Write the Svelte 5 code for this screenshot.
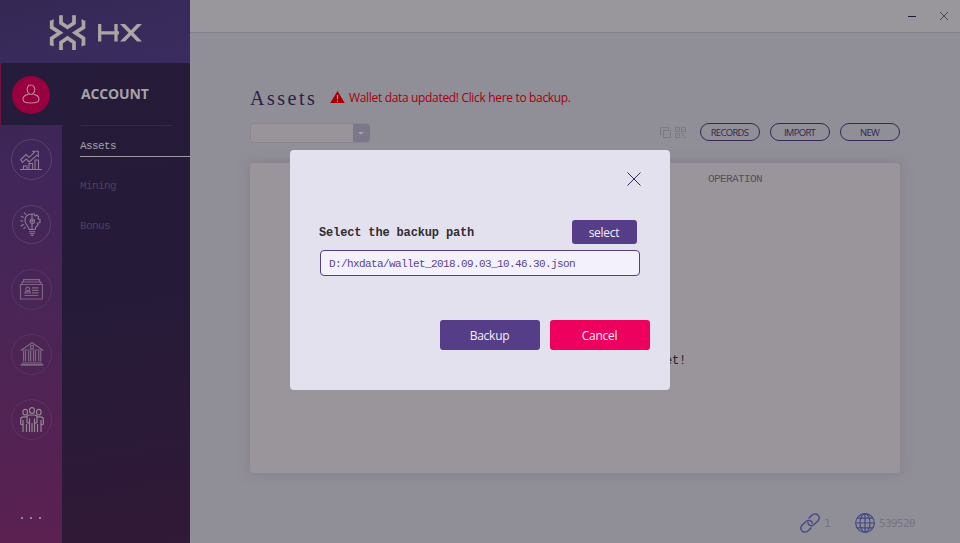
<script>
  const menu = ['Assets', 'Mining', 'Bonus'];
  const actions = ['RECORDS', 'IMPORT', 'NEW'];
  let path = $state('D:/hxdata/wallet_2018.09.03_10.46.30.json');
</script>

<div class="app">
  <aside class="side">
    <header class="brand">
      <svg class="mark" width="37" height="36" viewBox="0 0 37 36" fill="none" stroke="#a9a6a3" stroke-width="3.7">
        <path d="M12 .3V8L18.500 12.200 25 8V.3" />
        <path d="M12 35V27.400L18.500 23 25 27.400V35" />
        <path d="M2.700 5.500V12.400L11 17.800 2.700 23.200V30.500" />
        <path d="M34.500 5.500V12.400L26.200 17.800 34.500 23.200V30.500" />
        <path d="M.9 7L4.500 3.700V7ZM36.300 7L32.700 3.700V7ZM.9 29L4.500 31.700V28ZM36.300 29L32.700 31.700V28Z" fill="#a9a6a3" stroke="none" />
      </svg>
      <svg class="mark-name" width="44" height="18" viewBox="0 0 44 18" fill="none" stroke="#a9a6a3" stroke-width="3.300">
        <path d="M1.700 0V17.500M18 0V17.500M2 8.800H21" />
        <path d="M22 0H27L33 6.200 39 0H44L35.500 8.700 44 17.500H39L33 11.200 27 17.500H22L30.500 8.700Z" fill="#a9a6a3" stroke="none" />
      </svg>
    </header>
    <div class="columns">
      <nav class="rail">
        <div class="tile active">
          <span class="disc red">
            <svg width="18" height="21" viewBox="0 0 18 21" fill="none" stroke="#c0859a" stroke-width="1.1">
              <path d="M9 1C6.500 1 5.200 3 5.200 5.500S6.900 10.500 9 10.500 12.800 8 12.800 5.500 11.500 1 9 1ZM6.500 10.400C3 11 1 12.400 1 15.200 1 18 4 19 9 19S17 18 17 15.200C17 12.400 15 11 11.500 10.400" />
            </svg>
          </span>
        </div>
        <div class="tile">
          <span class="disc">
            <svg width="22" height="22" viewBox="0 0 22 22" fill="none" stroke="#8c7c94" stroke-width="1.1">
              <path d="M0 20.500H22M3.500 20V17H7V20M9 20V14.500H12.500V20M15 20V11H18.500V20M.7 10.500L6 5.500 9 8.300 14.300 3.500 13 2.200H18.300V7.500L17 6.200 9.200 13 6.200 10 2.300 13.300Z" />
            </svg>
          </span>
        </div>
        <div class="tile">
          <span class="disc small">
            <svg width="22" height="25" viewBox="0 0 22 25" fill="none" stroke="#8c7c94" stroke-width="1.100">
              <path d="M12 2C7.300 2 5 5 5 8.700 5 12.500 8.700 14 9.200 17.500H15.200C15.200 15 16.500 14 18 13L17.300 11.300 20 10.500V7.500L17.900 6.700 18.600 4.800 16.700 3 15 4 14.300 2ZM12 2V7M12 11.500V17.500M9.200 19.700H15.200M9.500 21.800H14.900M11 23.500H13.400M.2 9H3.200M.8 4L3.700 5.500M4 .5L6 2.700M.8 14.200L3.700 12.200M3.500 17L5.500 14.800" />
              <circle cx="12.300" cy="9.200" r="2.200" /><circle cx="12.300" cy="9.200" r=".6" />
            </svg>
          </span>
        </div>
        <div class="tile">
          <span class="disc faint">
            <svg width="24" height="22" viewBox="0 0 24 22" fill="none" stroke="#7d6683" stroke-width="1.200">
              <path d="M1.500 5.500H23.500V20H1.500ZM3 5V3H22V5M4.500 2.500V.7H20.500V2.500M13 8.800H19.500M13 11.300H19.500M13 13.800H19.500M5.500 16.500H19.500M6 14Q6 12.200 8.700 12.200T11.500 14Z" />
              <circle cx="8.700" cy="10" r="1.900" />
            </svg>
          </span>
        </div>
        <div class="tile">
          <span class="disc faint">
            <svg class="nudge" width="24" height="25" viewBox="0 0 24 25" fill="none" stroke="#7d6683" stroke-width="1.200">
              <path d="M1.500 8L12 .7 22.500 8ZM3.500 9V19.500M5.500 9V19.500M8.700 9V19.500M10.700 9V19.500M13.500 9V19.500M15.500 9V19.500M18.700 9V19.500M20.700 9V19.500M2 21H22" />
              <path d="M.7 22.800H23.300" stroke-width="1.800" /><circle cx="12" cy="5" r="1.700" />
            </svg>
          </span>
        </div>
        <div class="tile">
          <span class="disc faint">
            <svg class="nudge" width="24" height="26" viewBox="0 0 24 26" fill="none" stroke="#918791" stroke-width="1.200">
              <ellipse cx="12" cy="3.500" rx="2.500" ry="2.900" /><ellipse cx="5.200" cy="5.200" rx="2.300" ry="2.800" /><ellipse cx="18.800" cy="5.200" rx="2.300" ry="2.800" />
              <path d="M9.500 25V16.500L7 15.500V10.500Q7 8 9.500 8H14.500Q17 8 17 10.500V15.500L14.500 16.500V25M12 16V25M6.500 9.800H3.500Q.7 9.800 .7 12.500V17L3 18V25M3 13V18M6.500 17V25M17.500 9.800H20.500Q23.300 9.800 23.300 12.500V17L21 18V25M21 13V18M17.500 17V25M9.500 11.500V16.500M14.500 11.500V16.500" />
            </svg>
          </span>
        </div>
        <div class="more"><i></i><i></i><i></i></div>
      </nav>
      <section class="submenu">
        <h2>ACCOUNT</h2>
        <ul>
          {#each menu as item, i}
            <li class:current={i === 0}>{item}</li>
          {/each}
        </ul>
      </section>
    </div>
  </aside>

  <main>
    <div class="titlebar">
      <svg width="8" height="10" viewBox="0 0 8 10"><path d="M0 5.500H8" stroke="#211739" /></svg>
      <svg width="8" height="10" viewBox="0 0 8 10"><path d="M0 1L8 9M8 1L0 9" stroke="#4d4855" /></svg>
    </div>
    <div class="heading">
      <h1>Assets</h1>
      <svg width="15" height="13" viewBox="0 0 15 13"><path d="M7.500 0L14.700 12H.3Z" fill="#a70000" /><path d="M7.500 4V8.300M7.500 9.500V10.800" stroke="#aaa0a6" stroke-width="1.200" /></svg>
      <span>Wallet data updated! Click here to backup.</span>
    </div>
    <div class="tools">
      <div class="combo"><b><svg width="6" height="3" viewBox="0 0 6 3"><path d="M0 0H6L3 2.500Z" fill="#a8a5b0" /></svg></b></div>
      <svg class="copy" width="26" height="12" viewBox="0 0 26 12" fill="none" stroke="#7b7984">
        <path d="M3.500 3.500H10.500V10.500H3.500ZM2.500 7.500H.5V.5H8.500V2.500M15.500 .5H19.500V4.500H15.500ZM21.500 .5H25.500V4.500H21.500ZM15.500 6.500H19.500V10.500H15.500ZM21 6.500H23M25 6.500H26M22 8.500H24M21 10.500H22M24 10.500H26M17 2.500H18M23 2.500H24M17 8.500H18" />
      </svg>
      <div class="pills">
        {#each actions as action}<button>{action}</button>{/each}
      </div>
    </div>
    <div class="card">
      <div class="th">OPERATION</div>
      <div class="empty">You have no account in the wallet!</div>
    </div>
    <footer>
      <svg width="20" height="20" viewBox="0 0 20 20" fill="none" stroke="#434787" stroke-width="1.400">
        <path d="M9.500 12.200Q11.500 13.400 13.500 12L18.300 7.500Q20.500 4 17.300 1.500 14.500 .1 12.400 1.700L8.600 5.500M9.500 12.200Q7.300 11 8.200 8.800M10.700 7.800Q8.700 6.800 6.500 8L1.700 12.500Q-.5 16 2.700 18.500 5.500 19.900 7.600 18.300L11.400 14.500M10.700 7.800Q12.700 9 12 11" />
      </svg>
      <span class="peers">1</span>
      <svg width="20" height="20" viewBox="0 0 20 20" fill="none" stroke="#434787" stroke-width="1.200">
        <circle cx="10" cy="10" r="9.300" /><ellipse cx="10" cy="10" rx="5" ry="9.300" /><path d="M10 .7V19.300M.7 10H19.300M2.200 5.200H17.800M2.200 14.800H17.800" />
      </svg>
      <span>539520</span>
    </footer>
  </main>

  <div class="dialog">
    <div class="close">
      <svg width="14" height="14" viewBox="0 0 14 14"><path d="M.5 .5L13.500 13.500M13.500 .5L.5 13.500" stroke="#34265a" stroke-width="1" /></svg>
    </div>
    <div class="pick">
      <strong>Select the backup path</strong>
      <button>select</button>
    </div>
    <input bind:value={path} spellcheck="false" />
    <div class="buttons">
      <button>Backup</button>
      <button class="cancel">Cancel</button>
    </div>
  </div>
</div>

<style>
  * { box-sizing: border-box; }
  .app { position: relative; display: flex; width: 960px; height: 543px; overflow: hidden; background: #908e97; font-family: "Open Sans", "Noto Sans", sans-serif; }
  button { border: 0; padding: 0; font-family: inherit; }
  svg { display: block; flex: none; }
  .side { width: 190px; display: flex; flex-direction: column; }
  .brand { height: 63px; background: linear-gradient(165deg, #352854, #3b2c60); display: flex; padding: 15px 0 0 49px; gap: 12px; }
  .mark-name { margin-top: 9px; }
  .columns { flex: 1; display: flex; }
  .rail { width: 62px; background: linear-gradient(175deg, #37264f 0, #40265a 20%, #4b2555 55%, #5b2151 100%); display: flex; flex-direction: column; }
  .tile { height: 65px; display: flex; justify-content: center; align-items: center; padding-top: 4px; }
  .tile.active { height: 62px; background: #251b3a; padding: 1px 1px 0 0; border-left: 1px solid #73123e; }
  .disc { width: 41px; height: 41px; border: 1px solid #5b426e; border-radius: 50%; display: flex; align-items: center; justify-content: center; }
  .disc.small { width: 39px; height: 39px; }
  .disc.faint { border-color: #53366a; }
  .disc.red { width: 38px; height: 38px; background: #98003f; border: 0; }
  .nudge { margin-left: 1px; }
  .more { display: flex; gap: 7px; margin: 67px 0 0 21px; }
  .more i { width: 2px; height: 2px; background: #8f8792; }
  .submenu { flex: 1; background: linear-gradient(170deg, #251b3a 0, #251b38 50%, #311937 100%); }
  h2 { margin: 0 17px 0 19px; height: 63px; border-bottom: 1px solid #33265c; font: 700 14px/62px "Open Sans", sans-serif; color: #a6a3a5; letter-spacing: -.15px; }
  ul { margin: 0; padding: 12px 0 0 18px; list-style: none; }
  li { height: 40px; font: 11px/17px "Liberation Mono", monospace; letter-spacing: -.6px; color: #4b405e; }
  li.current { height: 19px; margin-bottom: 21px; border-bottom: 1px solid #a09ca4; color: #a5a1a6; }
  main { flex: 1; display: flex; flex-direction: column; }
  .titlebar { height: 33px; background: #99969c; border-bottom: 1px solid #85828f; display: flex; justify-content: flex-end; align-items: center; gap: 24px; padding-right: 12px; }
  .heading { height: 90px; padding: 50px 0 0 60px; display: flex; align-items: flex-start; }
  h1 { margin: 0 14px 0 0; width: 66px; font: 400 20px/30px "Liberation Serif", serif; letter-spacing: 2.500px; color: #2a1f46; white-space: nowrap; }
  .heading svg { margin-top: 8px; }
  .heading span { margin-left: 4px; font: 12px/29px "Open Sans", sans-serif; letter-spacing: -.33px; color: #a90008; white-space: nowrap; }
  .tools { display: flex; padding: 0 60px; height: 40px; }
  .combo { width: 120px; height: 20px; border: 1px solid #8a8791; border-right-color: #7c788a; border-radius: 4px; background: #98949a; display: flex; justify-content: flex-end; overflow: hidden; }
  .combo b { width: 16px; background: #7c788a; display: grid; place-items: center; }
  .copy { margin: 4px 14px 0 290px; }
  .pills { display: flex; gap: 10px; }
  .pills button { width: 60px; height: 18px; border: 1px solid #372857; border-radius: 9px; background: transparent; color: #33284d; font-size: 9.500px; line-height: 18px; letter-spacing: -.7px; padding-right: 1px; }
  .card { height: 310px; margin: 0 60px; border-radius: 4px; background: #99959b; box-shadow: 0 0 12px #827f88; font-family: "Liberation Mono", monospace; }
  .th { padding: 8px 0 0 458px; font-size: 11px; line-height: 16px; letter-spacing: -.6px; color: #55505d; }
  .empty { text-align: right; padding: 165px 214px 0 0; font-size: 12px; line-height: 18px; letter-spacing: -.2px; color: #242028; }
  footer { display: flex; align-items: center; margin-top: 40px; padding-left: 610px; height: 20px; font: 11px "DejaVu Sans Mono", monospace; letter-spacing: -.62px; color: #777580; }
  footer .peers { width: 31px; margin-left: 4px; }
  footer span:last-child { margin-left: 4px; }
  .dialog { position: absolute; left: 290px; top: 150px; width: 380px; height: 240px; border-radius: 4px; background: #e4e1ee; padding: 0 30px; display: flex; flex-direction: column; }
  .close { height: 70px; padding-top: 22px; display: flex; justify-content: flex-end; align-items: flex-start; margin-right: -1px; }
  .pick { height: 30px; display: flex; align-items: flex-start; justify-content: space-between; padding-right: 3px; }
  strong { font: 700 12px/26px "Liberation Mono", monospace; letter-spacing: -.15px; color: #302d30; margin-left: -1px; white-space: nowrap; }
  .pick button { width: 65px; height: 24px; border-radius: 3px; background: #553d88; color: #f2eff7; font-size: 12px; line-height: 23px; letter-spacing: -.25px; padding-right: 1px; }
  input { width: 320px; height: 26px; border: 1px solid #553d88; border-radius: 4px; background: #f3f1fb; padding: 1px 8px 0; color: #5b448c; font: 11px "Liberation Mono", monospace; letter-spacing: -.6px; outline: 0; }
  .buttons { display: flex; gap: 10px; margin: 44px 0 0 120px; width: 210px; }
  .buttons button { width: 100px; height: 30px; border-radius: 3px; background: #553d88; color: #f4f0f7; font-size: 12px; line-height: 29px; letter-spacing: -.25px; padding-right: 1px; }
  .buttons .cancel { background: #ee005e; }
</style>
